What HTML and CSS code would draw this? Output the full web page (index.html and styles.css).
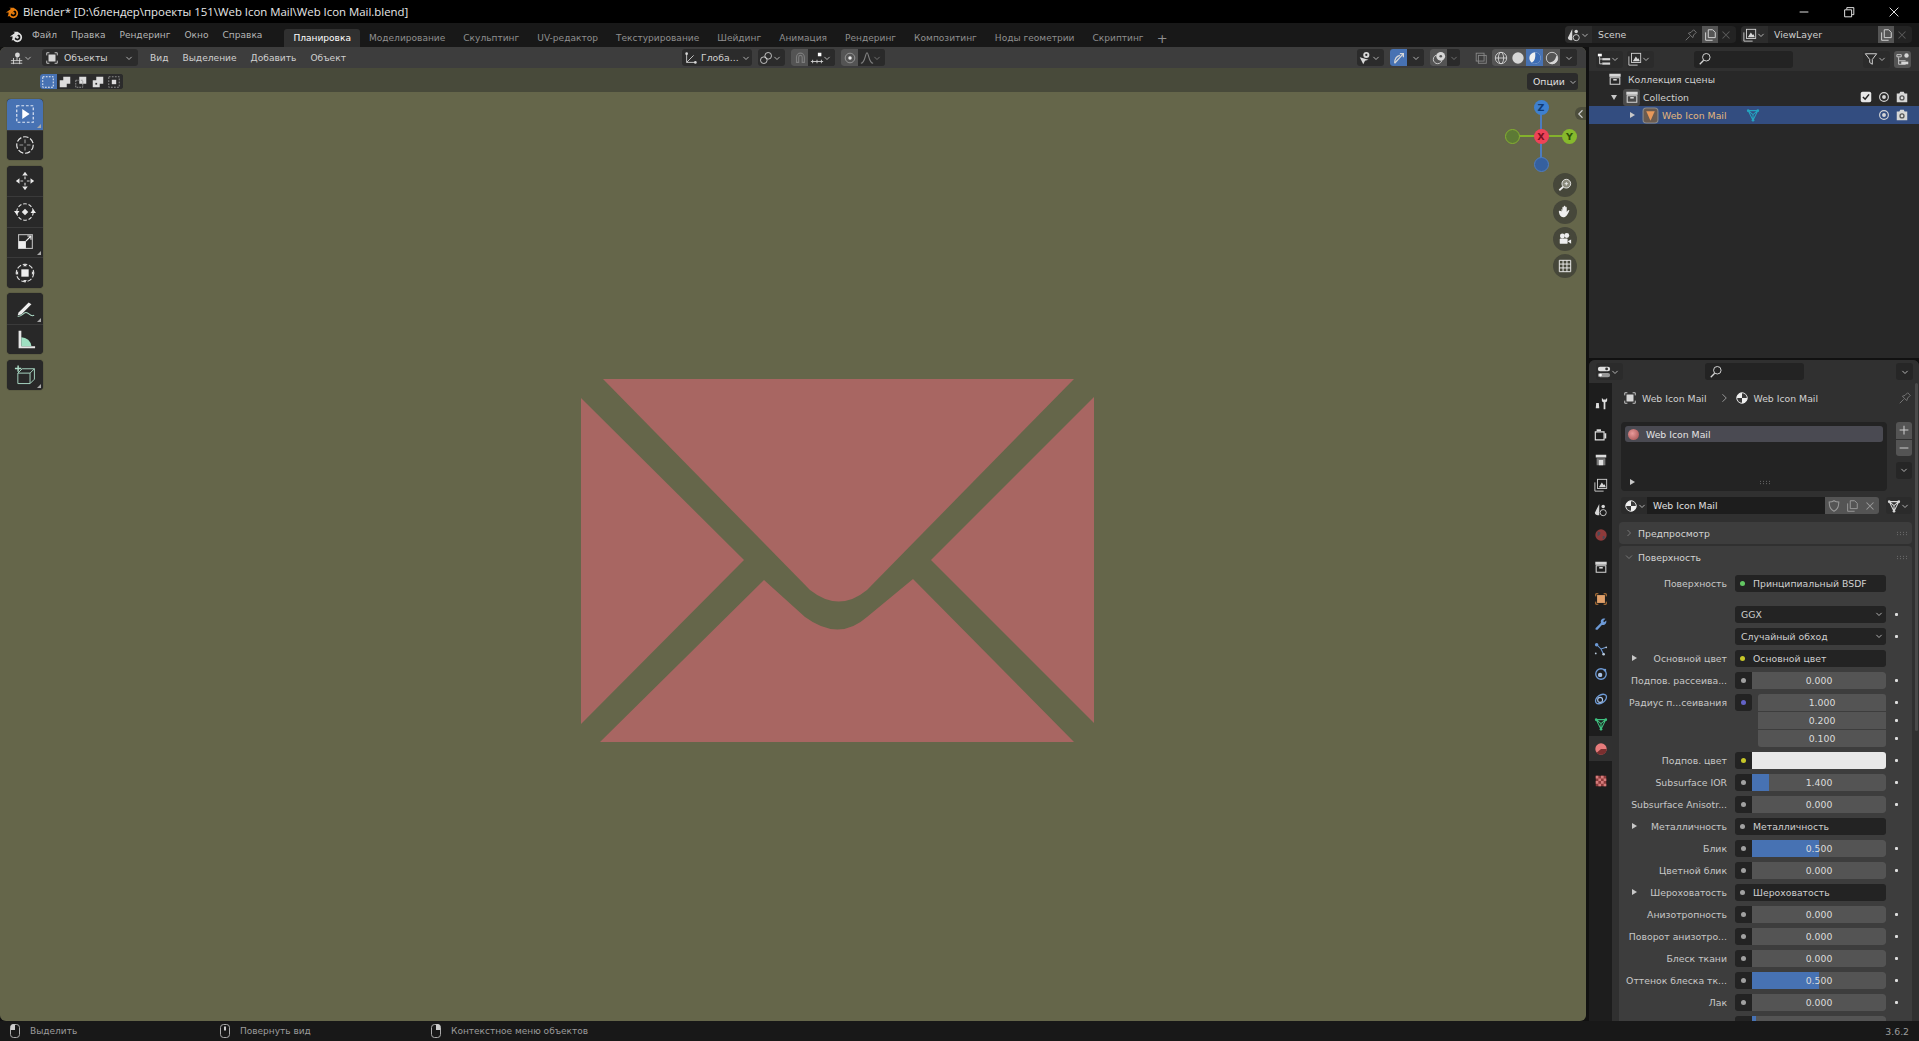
FILE: index.html
```html
<!DOCTYPE html>
<html lang="en">
<head>
  <meta charset="UTF-8" />
  <title>Blender</title>
  <link rel="stylesheet" href="styles.css">
</head>
<body>

  <!-- icon sprite -->
  <svg class="sprite" xmlns="http://www.w3.org/2000/svg">
    <symbol id="chev" viewBox="0 0 16 16"><path d="M4.5 6.5 8 10l3.500-3.500" fill="none" stroke="currentColor" stroke-width="1.200"/></symbol>
    <symbol id="blender" viewBox="0 0 16 16"><circle cx="9.500" cy="9.500" r="4.500" fill="none" stroke="currentColor" stroke-width="2"/><path d="M1 8.500 7 4.500 5 3h5l4 4-3-1-6 6.500-2 .5 2-4.500z" fill="currentColor"/><circle cx="9.500" cy="9.500" r="1.500" fill="currentColor"/></symbol>
    <symbol id="view3d" viewBox="0 0 16 16"><path d="M1 11h13M4 8v7M11 8v7M1 14h13" stroke="currentColor" fill="none"/><circle cx="8.500" cy="4.500" r="2.800" fill="currentColor"/><path d="M8 7v4" stroke="currentColor"/></symbol>
    <symbol id="obj" viewBox="0 0 16 16"><path d="M2 5V2h3M11 2h3v3M14 11v3h-3M5 14H2v-3" fill="none" stroke="currentColor"/><rect x="4" y="4" width="8" height="8" fill="currentColor"/></symbol>
    <symbol id="orient" viewBox="0 0 16 16"><path d="M3 3v10h10M3 13l8-8" fill="none" stroke="currentColor"/><circle cx="3" cy="3" r="1.500" fill="currentColor"/><circle cx="13" cy="13" r="1.500" fill="currentColor"/></symbol>
    <symbol id="pivot" viewBox="0 0 16 16"><circle cx="5.500" cy="10.500" r="3.800" fill="none" stroke="currentColor"/><circle cx="10.500" cy="5.500" r="3.800" fill="none" stroke="currentColor"/></symbol>
    <symbol id="magnet" viewBox="0 0 16 16"><path d="M4 13V7a4.500 4.500 0 0 1 9 0v6h-2.500V7a2 2 0 0 0-4 0v6z" fill="none" stroke="currentColor" stroke-width="1.300"/></symbol>
    <symbol id="snapgrid" viewBox="0 0 16 16"><path d="M1 12h14M3 10v4M8 10v4M13 10v4" stroke="currentColor" fill="none"/><rect x="9" y="2" width="4" height="4" fill="#fff"/></symbol>
    <symbol id="propedit" viewBox="0 0 16 16"><circle cx="8" cy="8" r="5.500" fill="none" stroke="#9a9a9a"/><circle cx="8" cy="8" r="2" fill="#eee"/></symbol>
    <symbol id="falloff" viewBox="0 0 16 16"><path d="M1 14C6 14 6 2 8 2s2 12 7 12" fill="none" stroke="currentColor" stroke-width="1.200"/></symbol>
    <symbol id="vis" viewBox="0 0 16 16"><path d="M2 7l10 3-4 1-2 4z" fill="currentColor"/><circle cx="9.500" cy="4.500" r="3.500" fill="currentColor"/><circle cx="9.500" cy="4.500" r="1.300" fill="#2a2a2a"/></symbol>
    <symbol id="gizmo" viewBox="0 0 16 16"><path d="M3 14 13 3M9 3h4v4M3 14C3 9 5 6 9 5" fill="none" stroke="currentColor" stroke-width="1.400"/></symbol>
    <symbol id="overlay" viewBox="0 0 16 16"><circle cx="6.500" cy="9.500" r="5" fill="none" stroke="currentColor"/><circle cx="10" cy="6" r="5" fill="currentColor"/><circle cx="10" cy="6" r="1.500" fill="#555"/></symbol>
    <symbol id="xray" viewBox="0 0 16 16"><rect x="2.500" y="2.500" width="9" height="9" fill="none" stroke="currentColor"/><rect x="5" y="5" width="9" height="9" fill="none" stroke="currentColor"/></symbol>
    <symbol id="shwire" viewBox="0 0 16 16"><g fill="none" stroke="currentColor"><circle cx="8" cy="8" r="6.500"/><ellipse cx="8" cy="8" rx="3" ry="6.500"/><path d="M1.500 8h13"/></g></symbol>
    <symbol id="shsolid" viewBox="0 0 16 16"><circle cx="8" cy="8" r="6.500" fill="currentColor"/></symbol>
    <symbol id="shmat" viewBox="0 0 16 16"><circle cx="8" cy="8" r="6.500" fill="#f0f0f0"/><path d="M8 1.500a6.500 6.500 0 0 1 0 13c-2 0-3-1-3.500-1.500C8 12 9 6 8 1.500z" fill="#3b6cb5"/></symbol>
    <symbol id="shrend" viewBox="0 0 16 16"><circle cx="8" cy="8" r="6.500" fill="none" stroke="currentColor"/><path d="M13 5a6 6 0 0 1-9 8c5 0 8-3 9-8z" fill="currentColor"/></symbol>
    <symbol id="scene" viewBox="0 0 16 16"><path d="M6 1 1 11c0 2 2 3 5 3z" fill="currentColor"/><circle cx="10.500" cy="4" r="2" fill="currentColor"/><circle cx="10.500" cy="11" r="3.500" fill="none" stroke="currentColor"/></symbol>
    <symbol id="layers" viewBox="0 0 16 16"><path d="M1 5v10h10" fill="none" stroke="currentColor"/><rect x="4" y="1.500" width="10.500" height="10.500" fill="none" stroke="currentColor"/><path d="M5.500 10.500 9 5l2 3 1-1 1.500 3.500z" fill="currentColor"/></symbol>
    <symbol id="pin" viewBox="0 0 16 16"><path d="M2 14l4.500-4.500M5 6l5 5 1-3 3-3-3-3-3 3z" fill="none" stroke="currentColor"/></symbol>
    <symbol id="newdoc" viewBox="0 0 16 16"><path d="M3 5v9h8M6 2v9h8V5l-3-3z" fill="none" stroke="currentColor" stroke-width="1.100"/></symbol>
    <symbol id="close" viewBox="0 0 16 16"><path d="M4 4l8 8M12 4l-8 8" fill="none" stroke="currentColor" stroke-width="1.200"/></symbol>
    <symbol id="outl" viewBox="0 0 16 16"><rect x="1" y="2" width="4.500" height="3" fill="#fff"/><rect x="6" y="7" width="9" height="2.500" fill="currentColor"/><rect x="6" y="12" width="9" height="2.500" fill="currentColor"/><path d="M3 5v8.500h3M3 8h3" fill="none" stroke="currentColor"/></symbol>
    <symbol id="search" viewBox="0 0 16 16"><circle cx="9.500" cy="6" r="4.300" fill="none" stroke="currentColor" stroke-width="1.100"/><path d="M6.500 9.500 2 14" stroke="currentColor" stroke-width="1.500"/></symbol>
    <symbol id="filter" viewBox="0 0 16 16"><path d="M1.500 2h13L9.500 8.500V14l-3-2V8.500z" fill="none" stroke="currentColor" stroke-width="1.100"/></symbol>
    <symbol id="newcoll" viewBox="0 0 16 16"><path d="M1 3h5v2.500H1zM3 6v8h8M3 10h8" fill="none" stroke="currentColor"/><rect x="6" y="11" width="8" height="3" fill="currentColor"/><circle cx="12" cy="4" r="2.500" fill="currentColor"/></symbol>
    <symbol id="coll" viewBox="0 0 16 16"><rect x="1.500" y="2" width="13" height="3.500" fill="currentColor"/><path d="M2.500 6.500h11V14h-11z" fill="none" stroke="currentColor" stroke-width="1.200"/><rect x="6" y="8" width="4" height="1.800" fill="currentColor"/></symbol>
    <symbol id="eye" viewBox="0 0 16 16"><circle cx="8" cy="8" r="5" fill="none" stroke="currentColor" stroke-width="1.300"/><circle cx="8" cy="8" r="2.200" fill="currentColor"/></symbol>
    <symbol id="cam" viewBox="0 0 16 16"><path d="M2 4h3l1-2h4l1 2h3v10H2z" fill="currentColor"/><circle cx="8" cy="9" r="3" fill="#555"/><circle cx="8" cy="9" r="1.500" fill="#ddd"/></symbol>
    <symbol id="check" viewBox="0 0 16 16"><rect x="2" y="2" width="12" height="12" rx="2" fill="#e6e6e6"/><path d="M4.500 8 7 10.500 11.500 5" fill="none" stroke="#222" stroke-width="1.800"/></symbol>
    <symbol id="meshdata" viewBox="0 0 16 16"><path d="M2.500 3h11L8 14z M2.500 3 8 7.500 13.500 3M8 7.500V14" fill="none" stroke="currentColor" stroke-width="1.200"/><g fill="currentColor"><circle cx="2.500" cy="3" r="1.500"/><circle cx="13.500" cy="3" r="1.500"/><circle cx="8" cy="14" r="1.500"/></g></symbol>
    <symbol id="meshobj" viewBox="0 0 16 16"><rect x="1" y="1" width="14" height="14" rx="3" fill="#6a5b50" stroke="#8b8b8b"/><path d="M4 4h8l-4 9z" fill="#e8985a"/></symbol>
    <symbol id="matball" viewBox="0 0 16 16"><circle cx="8" cy="8" r="6" fill="#f0f0f0" stroke="#f0f0f0"/><path d="M8 2.500A5.500 5.500 0 0 1 13.500 8H8zM8 8H2.500A5.500 5.500 0 0 0 8 13.500z" fill="#3a3a3a"/></symbol>
    <symbol id="shield" viewBox="0 0 16 16"><path d="M2.500 3.500C5 3.500 6.500 3 8 2c1.500 1 3 1.500 5.500 1.500 0 5-1 8.500-5.500 10.500C3.500 12 2.500 8.500 2.500 3.500z" fill="none" stroke="currentColor" stroke-width="1.200"/></symbol>
    <symbol id="prefs" viewBox="0 0 16 16"><rect x="1" y="2" width="14" height="5" rx="2.500" fill="#e0e0e0"/><rect x="1" y="9" width="14" height="5" rx="2.500" fill="#999"/><circle cx="11" cy="4.500" r="1.600" fill="#333"/><circle cx="4" cy="11.500" r="1.600" fill="#fff"/></symbol>

    <!-- toolbar -->
    <symbol id="t-select" viewBox="0 0 24 24"><rect x="3" y="3" width="18" height="18" fill="none" stroke="#dfe7f5" stroke-width="1.300" stroke-dasharray="3 2"/><path d="M9 6.500 17 12l-8 5.500z" fill="#fff"/></symbol>
    <symbol id="t-cursor" viewBox="0 0 24 24"><circle cx="12" cy="12" r="9" fill="none" stroke="#e8e8e8" stroke-width="1.300" stroke-dasharray="6 2"/><path d="M12 6v4M12 14v4M6 12h4M14 12h4" stroke="#9a9a9a" stroke-width="1.200"/></symbol>
    <symbol id="t-move" viewBox="0 0 24 24"><path d="M12 2l3 4H9zM12 22l-3-4h6zM2 12l4-3v6zM22 12l-4 3V9z" fill="#e8e8e8"/><path d="M12 7v3M12 14v3M7 12h3M14 12h3" stroke="#d0d0d0" stroke-width="1.300"/></symbol>
    <symbol id="t-rotate" viewBox="0 0 24 24"><path d="M3 12a9 9 0 0 1 18 0M21 12a9 9 0 0 1-18 0" fill="none" stroke="#e0e0e0" stroke-width="1.200" stroke-dasharray="4 2"/><path d="M0 11h6l-3 4zM18 13h6l-3-4z" fill="#eee"/><rect x="9.500" y="9.500" width="5" height="5" transform="rotate(45 12 12)" fill="#e8e8e8"/></symbol>
    <symbol id="t-scale" viewBox="0 0 24 24"><rect x="5" y="4" width="15" height="15" fill="none" stroke="#bbb" stroke-width="1.200"/><rect x="5" y="11" width="8" height="8" fill="#eee"/><path d="M13 11l5-5M14.500 5.500h4v4" fill="none" stroke="#eee" stroke-width="1.200"/></symbol>
    <symbol id="t-trans" viewBox="0 0 24 24"><circle cx="12" cy="12" r="9.500" fill="none" stroke="#ddd" stroke-width="1.200" stroke-dasharray="5 2"/><rect x="8" y="8" width="8" height="8" fill="#eee"/><path d="M12 1.500l2 3h-4zM12 22.500l-2-3h4zM1.500 12l3-2v4zM22.500 12l-3 2v-4z" fill="#ddd"/></symbol>
    <symbol id="t-annot" viewBox="0 0 24 24"><path d="M5 17 16 6l3 2L8 19l-4 1z" fill="#eee"/><path d="M4 21c4 1 6-4 9-4 4 0 4 5 9 3" fill="none" stroke="#aeddc8" stroke-width="1.100"/></symbol>
    <symbol id="t-measure" viewBox="0 0 24 24"><path d="M5 3h3v17H5zM5 20h18v2H5z" fill="#e6e6e6"/><path d="M8 10a11 11 0 0 1 11 10H8z" fill="#9fe0c2"/></symbol>
    <symbol id="t-add" viewBox="0 0 24 24"><path d="M1 5h7M4.500 1.500v7" stroke="#aeddc8" stroke-width="1.600"/><path d="M6 11h14v12H6zM6 11l5-5h14l-5 5M25 6v12l-5 5" transform="translate(-1.500 -.5) scale(.95)" fill="none" stroke="#a9d8c4" stroke-width="1.100"/></symbol>

    <!-- nav gizmo -->
    <symbol id="n-zoom" viewBox="0 0 16 16"><circle cx="9.500" cy="6.500" r="5" fill="#8a8a7c" stroke="#eee"/><path d="M7.500 6.500h4M9.500 4.500v4" stroke="#eee"/><path d="M6 10l-4.500 4" stroke="#eee" stroke-width="2"/></symbol>
    <symbol id="n-hand" viewBox="0 0 16 16"><path d="M4 6c0-3 1-1 1 1V3c0-1.500 1.500-1.500 1.500 0v3V2c0-1.500 2-1.500 2 0v4V3c0-1.500 1.500-1.500 1.500 0v5c1-2 3-3 3-1.500-1 1.500-2 6-6 7.500-3 0-5-1-6-6-.5-2 2-2 3-.5z" fill="#eee"/></symbol>
    <symbol id="n-cam" viewBox="0 0 16 16"><circle cx="5" cy="4.500" r="2.800" fill="#eee"/><circle cx="10" cy="4" r="2.800" fill="#eee"/><rect x="2" y="7.500" width="9" height="6" rx="1" fill="#eee"/><path d="M11 10.500l4-2v5z" fill="#eee"/></symbol>
    <symbol id="n-grid" viewBox="0 0 16 16"><path d="M1.500 1.500h13v13h-13zM1.500 5.800h13M1.500 10.200h13M5.800 1.500v13M10.200 1.500v13" fill="none" stroke="#eee" stroke-width="1.100"/></symbol>

    <!-- properties tabs -->
    <symbol id="p-tool" viewBox="0 0 16 16"><path d="M4 1v6M2.500 8h3l.5 6H2zM9 2v3c0 1 1 2 2 2v8h2V7c1 0 2-1 2-2V2l-1.500 2h-3z" fill="#ddd"/></symbol>
    <symbol id="p-render" viewBox="0 0 16 16"><path d="M1.500 4.500h10v9h-10z" fill="none" stroke="#e0e0e0" stroke-width="1.300"/><path d="M12 6h2v6h-2z" fill="#ddd"/><rect x="3" y="1.500" width="5" height="2" fill="#ddd"/></symbol>
    <symbol id="p-output" viewBox="0 0 16 16"><path d="M2 2h12v3H2z" fill="#ddd"/><path d="M3 6h10v8H3z" fill="#777"/><path d="M5.500 8h5v6h-5z" fill="#ddd"/></symbol>
    <symbol id="p-layer" viewBox="0 0 16 16"><use href="#layers" width="16" height="16"/></symbol>
    <symbol id="p-world" viewBox="0 0 16 16"><circle cx="8" cy="8" r="6.500" fill="#8f3a3a"/><path d="M4 4c3 0 4 1 3 3s-3 1-3 4M10 9c2 0 3 0 2 3l-2 1z" fill="#4a4a55"/></symbol>
    <symbol id="p-object" viewBox="0 0 16 16"><path d="M2 5V2h3M11 2h3v3M14 11v3h-3M5 14H2v-3" fill="none" stroke="#d8893f"/><rect x="3.500" y="3.500" width="9" height="9" fill="#e0a06a"/></symbol>
    <symbol id="p-mod" viewBox="0 0 16 16"><path d="M2 12.500 8 6.500C7 3.500 9.500 1 13 2l-2.500 2.500 1 1.500L14 4c.8 3.500-2 6-5 5l-5 5.500c-2 .5-3-.5-2-2z" fill="#6d9ad6"/></symbol>
    <symbol id="p-part" viewBox="0 0 16 16"><path d="M3 3l5 5 6-2M8 8l3 6" stroke="#6d9ad6" stroke-width="1.200" fill="none"/><circle cx="3" cy="3" r="2" fill="#6d9ad6"/><circle cx="14" cy="6" r="1" fill="#bcd"/><circle cx="11" cy="14" r="1.500" fill="#bcd"/><circle cx="2" cy="13" r="1" fill="#bcd"/></symbol>
    <symbol id="p-phys" viewBox="0 0 16 16"><circle cx="8" cy="8" r="6" fill="none" stroke="#6d9ad6" stroke-width="1.500"/><circle cx="7" cy="9" r="2.500" fill="#a9c4e8"/><circle cx="12.500" cy="3.500" r="1.500" fill="#6d9ad6"/></symbol>
    <symbol id="p-cons" viewBox="0 0 16 16"><ellipse cx="8" cy="8" rx="7" ry="4.500" transform="rotate(-35 8 8)" fill="none" stroke="#6d9ad6" stroke-width="1.500"/><circle cx="7" cy="9" r="2.800" fill="none" stroke="#a9c4e8" stroke-width="1.300"/></symbol>
    <symbol id="p-data" viewBox="0 0 16 16"><use href="#meshdata" width="16" height="16"/></symbol>
    <symbol id="p-mat" viewBox="0 0 16 16"><circle cx="8" cy="8" r="6.500" fill="#e67b7b"/><path d="M8 8h6.500A6.500 6.500 0 0 1 3 12.200z" fill="#7a2f2f"/></symbol>
    <symbol id="p-tex" viewBox="0 0 16 16"><rect x="2" y="2" width="12" height="12" fill="#8c3b3b"/><path d="M2 2h3v3H2zM8 2h3v3H8zM5 5h3v3H5zM11 5h3v3h-3zM2 8h3v3H2zM8 8h3v3H8zM5 11h3v3H5zM11 11h3v3h-3z" fill="#d67c7c"/></symbol>

    <symbol id="mouse-l" viewBox="0 0 12 16"><rect x="1.500" y="1.500" width="9" height="13" rx="3" fill="none" stroke="#aaa"/><path d="M1.500 7V4.500a3 3 0 0 1 4.500-3V7z" fill="#ccc"/></symbol>
    <symbol id="mouse-m" viewBox="0 0 12 16"><rect x="1.500" y="1.500" width="9" height="13" rx="3" fill="none" stroke="#aaa"/><rect x="5" y="3.500" width="2" height="4" fill="#ccc"/></symbol>
    <symbol id="mouse-r" viewBox="0 0 12 16"><rect x="1.500" y="1.500" width="9" height="13" rx="3" fill="none" stroke="#aaa"/><path d="M10.500 7V4.500a3 3 0 0 0-4.500-3V7z" fill="#ccc"/></symbol>
  </svg>

  <div class="titlebar">
    <svg class="ic title-logo"><use href="#blender"/></svg>
    <span class="title-text">Blender* [D:\блендер\проекты 151\Web Icon Mail\Web Icon Mail.blend]</span>
    <div class="win-btns">
      <svg class="ic" viewBox="0 0 16 16"><path d="M3 8h10" stroke="#fff"/></svg>
      <svg class="ic" viewBox="0 0 16 16"><path d="M3 5.500h8v8H3zM5.500 5V3h8v8H11.500" fill="none" stroke="#fff"/></svg>
      <svg class="ic" viewBox="0 0 16 16"><path d="M3 3l10 10M13 3 3 13" stroke="#fff"/></svg>
    </div>
  </div>

  <div class="topbar">
    <svg class="ic top-logo"><use href="#blender"/></svg>
    <nav class="menu">
      <span>Файл</span><span>Правка</span><span>Рендеринг</span><span>Окно</span><span>Справка</span>
    </nav>
    <nav class="tabs">
      <span class="tab active">Планировка</span>
      <span class="tab">Моделирование</span>
      <span class="tab">Скульптинг</span>
      <span class="tab">UV-редактор</span>
      <span class="tab">Текстурирование</span>
      <span class="tab">Шейдинг</span>
      <span class="tab">Анимация</span>
      <span class="tab">Рендеринг</span>
      <span class="tab">Композитинг</span>
      <span class="tab">Ноды геометрии</span>
      <span class="tab">Скриптинг</span>
      <span class="tab plus">+</span>
    </nav>
    <div class="selector scene-sel">
      <span class="sel-icon"><svg class="ic"><use href="#scene"/></svg><svg class="ic chev"><use href="#chev"/></svg></span>
      <span class="sel-name">Scene</span>
      <svg class="ic dim"><use href="#pin"/></svg>
      <span class="sel-btn"><svg class="ic"><use href="#newdoc"/></svg></span>
      <span class="sel-x"><svg class="ic"><use href="#close"/></svg></span>
    </div>
    <div class="selector layer-sel">
      <span class="sel-icon"><svg class="ic"><use href="#layers"/></svg><svg class="ic chev"><use href="#chev"/></svg></span>
      <span class="sel-name">ViewLayer</span>
      <span class="sel-btn"><svg class="ic"><use href="#newdoc"/></svg></span>
      <span class="sel-x"><svg class="ic"><use href="#close"/></svg></span>
    </div>
  </div>

  <div class="workspace">

    <main class="viewport">
      <div class="vp-header">
        <span class="hbtn editor-btn"><svg class="ic"><use href="#view3d"/></svg><svg class="ic chev"><use href="#chev"/></svg></span>
        <span class="hbtn mode-btn"><svg class="ic"><use href="#obj"/></svg><span class="mode-label">Объекты</span><svg class="ic chev"><use href="#chev"/></svg></span>
        <nav class="vp-menu"><span>Вид</span><span>Выделение</span><span>Добавить</span><span>Объект</span></nav>

        <div class="vp-center">
          <span class="hbtn orient-btn"><svg class="ic"><use href="#orient"/></svg><span>Глоба...</span><svg class="ic chev"><use href="#chev"/></svg></span>
          <span class="hbtn pivot-btn"><svg class="ic"><use href="#pivot"/></svg><svg class="ic chev"><use href="#chev"/></svg></span>
          <span class="group">
            <span class="gbtn grey"><svg class="ic dim"><use href="#magnet"/></svg></span>
            <span class="gbtn wide"><svg class="ic"><use href="#snapgrid"/></svg><svg class="ic chev"><use href="#chev"/></svg></span>
          </span>
          <span class="group">
            <span class="gbtn grey"><svg class="ic"><use href="#propedit"/></svg></span>
            <span class="gbtn wide off"><svg class="ic"><use href="#falloff"/></svg><svg class="ic chev"><use href="#chev"/></svg></span>
          </span>
        </div>

        <div class="vp-right">
          <span class="hbtn vis-btn"><svg class="ic"><use href="#vis"/></svg><svg class="ic chev"><use href="#chev"/></svg></span>
          <span class="group">
            <span class="gbtn blue"><svg class="ic"><use href="#gizmo"/></svg></span>
            <span class="gbtn"><svg class="ic chev"><use href="#chev"/></svg></span>
          </span>
          <span class="group">
            <span class="gbtn grey"><svg class="ic"><use href="#overlay"/></svg></span>
            <span class="gbtn narrow off"><svg class="ic chev"><use href="#chev"/></svg></span>
          </span>
          <span class="gbtn xray off"><svg class="ic"><use href="#xray"/></svg></span>
          <span class="group">
            <span class="gbtn grey"><svg class="ic"><use href="#shwire"/></svg></span>
            <span class="gbtn grey"><svg class="ic"><use href="#shsolid"/></svg></span>
            <span class="gbtn blue"><svg class="ic"><use href="#shmat"/></svg></span>
            <span class="gbtn grey"><svg class="ic"><use href="#shrend"/></svg></span>
            <span class="gbtn"><svg class="ic chev"><use href="#chev"/></svg></span>
          </span>
        </div>
      </div>

      <div class="vp-tools">
        <span class="group selmode">
          <span class="gbtn blue"><svg class="ic" viewBox="0 0 16 16"><rect x="2" y="2" width="12" height="12" fill="none" stroke="#fff" stroke-dasharray="2 1.500"/></svg></span>
          <span class="gbtn"><svg class="ic" viewBox="0 0 16 16"><path d="M6 2h8v8H10v4H2V6h4z" fill="#ddd"/></svg></span>
          <span class="gbtn"><svg class="ic" viewBox="0 0 16 16"><path d="M6 2h8v8H6z" fill="#ddd"/><path d="M2 6h8v8H2z" fill="none" stroke="#999" stroke-dasharray="2 1"/></svg></span>
          <span class="gbtn"><svg class="ic" viewBox="0 0 16 16"><path d="M6 2h8v8h-4V6H6zM2 6h8v8H2z" fill="#ddd"/><rect x="5" y="9" width="2" height="2" fill="#333"/></svg></span>
          <span class="gbtn"><svg class="ic" viewBox="0 0 16 16"><rect x="2" y="2" width="12" height="12" fill="none" stroke="#999" stroke-dasharray="2 1.500"/><rect x="5.500" y="5.500" width="5" height="5" fill="#ddd"/></svg></span>
        </span>
        <span class="hbtn options-btn">Опции<svg class="ic chev"><use href="#chev"/></svg></span>
      </div>

      <div class="canvas">
        <svg class="envelope" viewBox="580 378 515 365">
          <path d="M603 379H1074L867 590Q839 613 810 590Z"/>
          <path d="M581 398 744 560 581 724Z"/>
          <path d="M1094 397 931 560 1094 723Z"/>
          <path d="M600 742 764 580 805 617Q839 642 867 617L913 579 1074 742Z"/>
        </svg>

        <div class="toolbar">
          <div class="tool-group">
            <span class="tool active more"><svg class="ic-tool"><use href="#t-select"/></svg></span>
            <span class="tool"><svg class="ic-tool"><use href="#t-cursor"/></svg></span>
          </div>
          <div class="tool-group">
            <span class="tool"><svg class="ic-tool"><use href="#t-move"/></svg></span>
            <span class="tool"><svg class="ic-tool"><use href="#t-rotate"/></svg></span>
            <span class="tool more"><svg class="ic-tool"><use href="#t-scale"/></svg></span>
            <span class="tool"><svg class="ic-tool"><use href="#t-trans"/></svg></span>
          </div>
          <div class="tool-group">
            <span class="tool more"><svg class="ic-tool"><use href="#t-annot"/></svg></span>
            <span class="tool"><svg class="ic-tool"><use href="#t-measure"/></svg></span>
          </div>
          <div class="tool-group">
            <span class="tool more"><svg class="ic-tool"><use href="#t-add"/></svg></span>
          </div>
        </div>

        <div class="axis">
          <span class="axis-line v"></span>
          <span class="axis-line h"></span>
          <span class="ball ball-z">Z</span>
          <span class="ball ball-x">X</span>
          <span class="ball ball-y">Y</span>
          <span class="ball ball-ny"></span>
          <span class="ball ball-nz"></span>
        </div>

        <span class="side-handle"><svg class="ic" viewBox="0 0 16 16"><path d="M10 3 5 8l5 5" fill="none" stroke="#ccc" stroke-width="1.500"/></svg></span>

        <div class="navbtns">
          <span><svg class="ic"><use href="#n-zoom"/></svg></span>
          <span><svg class="ic"><use href="#n-hand"/></svg></span>
          <span><svg class="ic"><use href="#n-cam"/></svg></span>
          <span><svg class="ic"><use href="#n-grid"/></svg></span>
        </div>
      </div>
    </main>

    <aside class="side">

      <section class="outliner">
        <div class="ol-header">
          <span class="hbtn ol-btn"><svg class="ic"><use href="#outl"/></svg><svg class="ic chev"><use href="#chev"/></svg></span>
          <span class="hbtn ol-btn"><svg class="ic"><use href="#layers"/></svg><svg class="ic chev"><use href="#chev"/></svg></span>
          <span class="search ol-search"><svg class="ic"><use href="#search"/></svg></span>
          <span class="hbtn ol-btn ol-filter"><svg class="ic"><use href="#filter"/></svg><svg class="ic chev"><use href="#chev"/></svg></span>
          <span class="gbtn grey solo"><svg class="ic"><use href="#newcoll"/></svg></span>
        </div>
        <div class="ol-row lvl0"><svg class="ic"><use href="#coll"/></svg><span>Коллекция сцены</span></div>
        <div class="ol-row lvl1">
          <i class="tri down"></i>
          <span class="ol-box"><svg class="ic"><use href="#coll"/></svg></span>
          <span>Collection</span>
          <span class="ol-restrict">
            <svg class="ic"><use href="#check"/></svg><svg class="ic"><use href="#eye"/></svg><svg class="ic"><use href="#cam"/></svg>
          </span>
        </div>
        <div class="ol-row lvl2 selected">
          <i class="tri"></i>
          <svg class="ic ol-mesh"><use href="#meshobj"/></svg>
          <span class="ol-name">Web Icon Mail</span>
          <svg class="ic teal"><use href="#meshdata"/></svg>
          <span class="ol-restrict">
            <svg class="ic"><use href="#eye"/></svg><svg class="ic"><use href="#cam"/></svg>
          </span>
        </div>
      </section>

      <section class="props">
        <div class="pr-header">
          <span class="hbtn ol-btn"><svg class="ic"><use href="#prefs"/></svg><svg class="ic chev"><use href="#chev"/></svg></span>
          <span class="search pr-search"><svg class="ic"><use href="#search"/></svg></span>
          <span class="gbtn solo dark"><svg class="ic chev"><use href="#chev"/></svg></span>
        </div>
        <div class="pr-body">
          <div class="pr-tabs">
            <span class="ptab"><svg class="ic"><use href="#p-tool"/></svg></span>
            <span class="ptab sep"><svg class="ic"><use href="#p-render"/></svg></span>
            <span class="ptab"><svg class="ic"><use href="#p-output"/></svg></span>
            <span class="ptab"><svg class="ic"><use href="#p-layer"/></svg></span>
            <span class="ptab"><svg class="ic"><use href="#scene"/></svg></span>
            <span class="ptab"><svg class="ic"><use href="#p-world"/></svg></span>
            <span class="ptab sep"><svg class="ic"><use href="#coll"/></svg></span>
            <span class="ptab sep"><svg class="ic"><use href="#p-object"/></svg></span>
            <span class="ptab"><svg class="ic"><use href="#p-mod"/></svg></span>
            <span class="ptab"><svg class="ic"><use href="#p-part"/></svg></span>
            <span class="ptab"><svg class="ic"><use href="#p-phys"/></svg></span>
            <span class="ptab"><svg class="ic"><use href="#p-cons"/></svg></span>
            <span class="ptab green"><svg class="ic"><use href="#p-data"/></svg></span>
            <span class="ptab active"><svg class="ic"><use href="#p-mat"/></svg></span>
            <span class="ptab sep"><svg class="ic"><use href="#p-tex"/></svg></span>
          </div>

          <div class="pr-main">
            <div class="crumbs">
              <svg class="ic"><use href="#obj"/></svg><span>Web Icon Mail</span>
              <svg class="ic crumb-sep" viewBox="0 0 16 16"><path d="M6 3l5 5-5 5" fill="none" stroke="currentColor" stroke-width="1.300"/></svg>
              <svg class="ic"><use href="#matball"/></svg><span>Web Icon Mail</span>
              <svg class="ic dim crumb-pin"><use href="#pin"/></svg>
            </div>

            <div class="slots">
              <div class="slot-list">
                <div class="slot"><i class="slot-ball"></i>Web Icon Mail</div>
                <div class="slot-foot"><i class="tri"></i><span class="grip"></span></div>
              </div>
              <div class="slot-side">
                <span class="pm"><svg class="ic" viewBox="0 0 16 16"><path d="M8 3v10M3 8h10" stroke="#ccc" stroke-width="1.200"/></svg></span>
                <span class="pm"><svg class="ic" viewBox="0 0 16 16"><path d="M3 8h10" stroke="#ccc" stroke-width="1.200"/></svg></span>
                <span class="pm down"><svg class="ic chev"><use href="#chev"/></svg></span>
              </div>
            </div>

            <div class="matrow">
              <span class="mat-browse"><svg class="ic"><use href="#matball"/></svg><svg class="ic chev"><use href="#chev"/></svg></span>
              <span class="mat-name">Web Icon Mail</span>
              <span class="mat-btn"><svg class="ic"><use href="#shield"/></svg></span>
              <span class="mat-btn"><svg class="ic"><use href="#newdoc"/></svg></span>
              <span class="mat-btn"><svg class="ic"><use href="#close"/></svg></span>
              <span class="mat-link"><svg class="ic"><use href="#meshdata"/></svg><svg class="ic chev"><use href="#chev"/></svg></span>
            </div>

            <div class="panel closed">
              <div class="panel-head"><svg class="ic" viewBox="0 0 16 16"><path d="M6 4l4 4-4 4" fill="none" stroke="currentColor"/></svg>Предпросмотр<span class="grip"></span></div>
            </div>

            <div class="panel">
              <div class="panel-head"><svg class="ic" viewBox="0 0 16 16"><path d="M4 6l4 4 4-4" fill="none" stroke="currentColor"/></svg>Поверхность<span class="grip"></span></div>

              <div class="row"><label>Поверхность</label><span class="field link"><i class="sock green"></i>Принципиальный BSDF</span></div>

              <div class="row spaced"><label></label><span class="field sel">GGX<svg class="ic chev"><use href="#chev"/></svg></span><i class="deco"></i></div>
              <div class="row"><label></label><span class="field sel">Случайный обход<svg class="ic chev"><use href="#chev"/></svg></span><i class="deco"></i></div>
              <div class="row"><label><i class="tri"></i>Основной цвет</label><span class="field link"><i class="sock yellow"></i>Основной цвет</span></div>
              <div class="row"><label>Подпов. рассеива...</label><span class="field num"><i class="sock grey"></i><span class="val">0.000</span></span><i class="deco"></i></div>

              <div class="row vec">
                <label>Радиус п...сеивания</label>
                <span class="sock-box"><i class="sock purple"></i></span>
                <span class="vec-vals"><span>1.000</span><span>0.200</span><span>0.100</span></span>
                <span class="deco-col"><i class="deco"></i><i class="deco"></i><i class="deco"></i></span>
              </div>

              <div class="row"><label>Подпов. цвет</label><span class="field num"><i class="sock yellow"></i><span class="val swatch"></span></span><i class="deco"></i></div>
              <div class="row"><label>Subsurface IOR</label><span class="field num"><i class="sock grey"></i><span class="val"><b class="fill" style="width:13%"></b><em>1.400</em></span></span><i class="deco"></i></div>
              <div class="row"><label>Subsurface Anisotr...</label><span class="field num"><i class="sock grey"></i><span class="val">0.000</span></span><i class="deco"></i></div>
              <div class="row"><label><i class="tri"></i>Металличность</label><span class="field link"><i class="sock grey"></i>Металличность</span></div>
              <div class="row"><label>Блик</label><span class="field num"><i class="sock grey"></i><span class="val"><b class="fill" style="width:50%"></b><em>0.500</em></span></span><i class="deco"></i></div>
              <div class="row"><label>Цветной блик</label><span class="field num"><i class="sock grey"></i><span class="val">0.000</span></span><i class="deco"></i></div>
              <div class="row"><label><i class="tri"></i>Шероховатость</label><span class="field link"><i class="sock grey"></i>Шероховатость</span></div>
              <div class="row"><label>Анизотропность</label><span class="field num"><i class="sock grey"></i><span class="val">0.000</span></span><i class="deco"></i></div>
              <div class="row"><label>Поворот анизотро...</label><span class="field num"><i class="sock grey"></i><span class="val">0.000</span></span><i class="deco"></i></div>
              <div class="row"><label>Блеск ткани</label><span class="field num"><i class="sock grey"></i><span class="val">0.000</span></span><i class="deco"></i></div>
              <div class="row"><label>Оттенок блеска тк...</label><span class="field num"><i class="sock grey"></i><span class="val"><b class="fill" style="width:50%"></b><em>0.500</em></span></span><i class="deco"></i></div>
              <div class="row"><label>Лак</label><span class="field num"><i class="sock grey"></i><span class="val">0.000</span></span><i class="deco"></i></div>
              <div class="row"><label>Шероховатость лака</label><span class="field num"><i class="sock grey"></i><span class="val"><b class="fill" style="width:3%"></b><em>0.030</em></span></span><i class="deco"></i></div>
            </div>
            <span class="scrollbar"></span>
          </div>
        </div>
      </section>

    </aside>
  </div>

  <footer class="statusbar">
    <span class="hint first"><svg class="mouse"><use href="#mouse-l"/></svg>Выделить</span>
    <span class="hint second"><svg class="mouse"><use href="#mouse-m"/></svg>Повернуть вид</span>
    <span class="hint third"><svg class="mouse"><use href="#mouse-r"/></svg>Контекстное меню объектов</span>
    <span class="version">3.6.2</span>
  </footer>

</body>
</html>
```

FILE: styles.css
```css
* {
  box-sizing: border-box;
}
html, body {
  margin: 0;
  height: 100%;
  overflow: hidden;
}
body {
  display: flex;
  flex-direction: column;
  background: #111;
  color: #c8c8c8;
  font-family: "DejaVu Sans", sans-serif;
  font-size: 9.300px;
}
i, em {
  font-style: normal;
}
.sprite {
  display: none;
}
.ic {
  display: block;
  width: 14px;
  height: 14px;
  flex: none;
  color: #d6d6d6;
}
.ic.chev {
  width: 12px;
  height: 12px;
  color: #c0c0c0;
}
.ic.dim {
  color: #7d7d7d;
}

/* title bar */
.titlebar {
  height: 23px;
  flex: none;
  display: flex;
  align-items: center;
  background: #000;
  padding-left: 5px;
}
.title-logo {
  color: #e87d0d;
}
.title-text {
  margin-left: 4px;
  color: #e8e8e8;
  font-family: "Open Sans", sans-serif;
  font-size: 11.400px;
}
.win-btns {
  margin-left: auto;
  display: flex;
  gap: 31px;
  padding-right: 18px;
}

/* top bar */
.topbar {
  height: 24px;
  flex: none;
  display: flex;
  align-items: flex-end;
  background: #181818;
  color: #a8a8a8;
  font-size: 9.050px;
}
.top-logo {
  margin: 0 0 4px 9px;
  color: #e0e0e0;
}
.menu {
  display: flex;
  gap: 14px;
  margin-left: 9px;
  height: 100%;
  align-items: center;
  color: #b4b4b4;
}
.tabs {
  display: flex;
  margin-left: 22px;
  height: 18px;
}
.tab {
  display: flex;
  align-items: center;
  padding: 0 9px;
  color: #8f8f8f;
  border-radius: 3px 3px 0 0;
}
.tab.active {
  background: #303030;
  color: #fff;
}
.tab.plus {
  padding: 0 4px;
  font-size: 13px;
}
.selector {
  display: flex;
  align-items: center;
  height: 17px;
  margin-bottom: 4px;
  border-radius: 4px;
  background: #232323;
  color: #d0d0d0;
  font-size: 9.300px;
}
.scene-sel {
  width: 171px;
  margin-left: auto;
}
.layer-sel {
  width: 171px;
  margin: 0 7px 4px 5px;
}
.sel-icon {
  display: flex;
  align-items: center;
  width: 27px;
  height: 100%;
  padding-left: 2px;
  background: #2c2c2c;
  border-radius: 4px 0 0 4px;
}
.sel-icon .chev {
  margin-left: -2px;
}
.sel-name {
  flex: 1;
  padding-left: 6px;
}
.sel-btn {
  display: flex;
  justify-content: center;
  align-items: center;
  width: 16px;
  height: 100%;
  background: #545454;
}
.sel-x {
  display: flex;
  justify-content: center;
  width: 16px;
  margin-right: 2px;
}
.sel-x .ic {
  color: #5a5a5a;
}
.scene-sel .dim {
  margin-right: 4px;
}

/* main area */
.workspace {
  flex: 1;
  min-height: 0;
  display: flex;
  gap: 3px;
}
.viewport {
  width: 1586px;
  flex: none;
  display: flex;
  flex-direction: column;
  border-radius: 6px;
  overflow: hidden;
  background: #65664a;
}
.vp-header {
  height: 21px;
  flex: none;
  display: flex;
  align-items: center;
  padding-left: 9px;
  background: #3d3d3d;
  position: relative;
}
.hbtn {
  display: flex;
  align-items: center;
  height: 17px;
  background: #2b2b2b;
  border-radius: 3px;
  color: #d0d0d0;
  flex: none;
}
.editor-btn {
  width: 26px;
  padding-left: 1px;
  background: transparent;
}
.editor-btn .chev, .ol-btn .chev {
  margin-left: -2px;
}
.mode-btn {
  width: 96px;
  margin-left: 7px;
  padding: 0 3px 0 3px;
}
.mode-label {
  flex: 1;
  padding-left: 5px;
}
.vp-menu {
  display: flex;
  gap: 14px;
  margin-left: 12px;
  color: #d0d0d0;
  font-size: 9.100px;
}
.vp-center {
  position: absolute;
  left: 682px;
  top: 2px;
  display: flex;
  gap: 6px;
}
.orient-btn {
  width: 70px;
  padding-left: 2px;
}
.orient-btn span {
  flex: 1;
  padding-left: 3px;
}
.pivot-btn {
  width: 27px;
  padding-left: 1px;
}
.pivot-btn .chev {
  margin-left: -2px;
}
.group {
  display: flex;
  height: 17px;
  border-radius: 3px;
  overflow: hidden;
  background: #2b2b2b;
}
.gbtn {
  display: flex;
  justify-content: center;
  align-items: center;
  width: 17px;
  height: 17px;
  flex: none;
  background: #2b2b2b;
}
.gbtn.grey {
  background: #545454;
}
.gbtn.blue {
  background: #4772b3;
}
.gbtn.wide {
  width: 27px;
}
.gbtn.wide .chev {
  margin-left: -3px;
}
.gbtn.narrow {
  width: 13px;
}
.gbtn.off {
  opacity: 0.5;
}
.gbtn.solo {
  border-radius: 3px;
}
.gbtn.dark {
  background: #262626;
}
.vp-right {
  position: absolute;
  left: 1357px;
  top: 2px;
  display: flex;
  gap: 6px;
}
.vis-btn {
  width: 27px;
  padding-left: 1px;
}
.vis-btn .chev {
  margin-left: -2px;
}
.xray {
  background: #3d3d3d;
  margin: 0 -3px 0 6px;
}

.vp-tools {
  height: 24px;
  flex: none;
  display: flex;
  align-items: center;
  padding: 3px 8px 0 40px;
  background: #484a3a;
}
.selmode .gbtn {
  width: 16.500px;
  height: 15px;
}
.selmode {
  height: 15px;
}
.selmode .ic {
  width: 14px;
  height: 14px;
}
.options-btn {
  width: 51px;
  margin-left: auto;
  padding-left: 6px;
  gap: 2px;
  color: #e0e0e0;
}

/* canvas */
.canvas {
  flex: 1;
  position: relative;
}
.envelope {
  position: absolute;
  left: 580px;
  top: 286px;
  width: 515px;
  height: 365px;
  fill: #a86662;
}
.toolbar {
  position: absolute;
  left: 7px;
  top: 7px;
  width: 36px;
  display: flex;
  flex-direction: column;
  gap: 5.500px;
}
.tool-group {
  background: #282828;
  border-radius: 4px;
  overflow: hidden;
  box-shadow: 0 0 1px #1a1a1a;
}
.tool {
  position: relative;
  display: flex;
  height: 30.500px;
  align-items: center;
  justify-content: center;
}
.tool + .tool {
  border-top: 1px solid #3a3a3a;
}
.tool.active {
  background: #4772b3;
}
.tool.more::after {
  content: "";
  position: absolute;
  right: 2px;
  bottom: 2px;
  border-left: 4px solid transparent;
  border-bottom: 4px solid #aaa;
}
.ic-tool {
  display: block;
  width: 22px;
  height: 22px;
}

.axis {
  position: absolute;
  left: 1505px;
  top: 8px;
  width: 72px;
  height: 72px;
}
.axis-line {
  position: absolute;
}
.axis-line.v {
  left: 35px;
  top: 7px;
  width: 2px;
  height: 58px;
  background: #4d7cc0;
}
.axis-line.h {
  left: 7px;
  top: 35px;
  width: 58px;
  height: 2px;
  background: #84b12c;
}
.ball {
  position: absolute;
  width: 15px;
  height: 15px;
  border-radius: 50%;
  text-align: center;
  font-size: 9.500px;
  font-weight: bold;
  line-height: 15px;
}
.ball-z {
  left: 28.500px;
  top: 0;
  background: #3e80cf;
  color: #0f3a74;
}
.ball-x {
  left: 28.500px;
  top: 28.500px;
  background: #ee4358;
  color: #7a0f1e;
}
.ball-y {
  left: 57px;
  top: 28.500px;
  background: #86b92d;
  color: #2c5006;
}
.ball-ny {
  left: 0;
  top: 28.500px;
  background: #5d7a35;
  border: 1.500px solid #85b12f;
}
.ball-nz {
  left: 28.500px;
  top: 57px;
  background: #35609f;
  border: 1.500px solid #4d7cc0;
}
.side-handle {
  position: absolute;
  left: 1575px;
  top: 15px;
  width: 12px;
  height: 13px;
  display: flex;
  align-items: center;
  border-radius: 6px 0 0 6px;
  background: #4d4e3c;
}
.side-handle .ic {
  width: 12px;
  height: 12px;
}
.navbtns {
  position: absolute;
  left: 1553px;
  top: 81px;
  display: flex;
  flex-direction: column;
  gap: 3px;
}
.navbtns span {
  display: flex;
  align-items: center;
  justify-content: center;
  width: 24px;
  height: 24px;
  border-radius: 50%;
  background: #46473a;
}

/* right column */
.side {
  flex: 1;
  min-width: 0;
  display: flex;
  flex-direction: column;
  gap: 2px;
  overflow: hidden;
}
.outliner {
  height: 311px;
  flex: none;
  background: #282828;
  border-radius: 6px 6px 0 0;
}
.ol-header {
  height: 24px;
  display: flex;
  align-items: center;
  padding-left: 7px;
  background: #303030;
  gap: 4px;
}
.ol-btn {
  width: 27px;
  padding-left: 1px;
}
.ol-search {
  width: 99px;
  margin-left: 36px;
}
.ol-filter {
  margin-left: 66px;
}
.search {
  display: flex;
  align-items: center;
  height: 17px;
  padding-left: 4px;
  border-radius: 3px;
  background: #232323;
}
.ol-row {
  position: relative;
  display: flex;
  align-items: center;
  height: 18px;
  color: #d0d0d0;
}
.lvl0 {
  padding-left: 19px;
  gap: 6px;
  margin-top: -1px;
}
.lvl1 {
  padding-left: 22px;
}
.lvl2 {
  padding-left: 41px;
}
.ol-box {
  display: flex;
  width: 17px;
  height: 17px;
  margin: 0 3px 0 6px;
  align-items: center;
  justify-content: center;
  border-radius: 3px;
  background: #4a4a4a;
}
.selected {
  background: #334d80;
}
.ol-name {
  margin-left: 3px;
  width: 84px;
  color: #e3b77c;
}
.ol-mesh {
  width: 17px;
  height: 17px;
  margin-left: 7px;
}
.teal {
  color: #25a3bf;
}
.ol-restrict {
  display: flex;
  position: absolute;
  right: 10px;
  gap: 4px;
}
.tri {
  display: inline-block;
  width: 0;
  height: 0;
  border-left: 5px solid #c8c8c8;
  border-top: 3px solid transparent;
  border-bottom: 3px solid transparent;
}
.tri.down {
  border-left: 3px solid transparent;
  border-right: 3px solid transparent;
  border-top: 5px solid #c8c8c8;
  border-bottom: 0;
}

/* properties */
.props {
  flex: 1;
  min-height: 0;
  display: flex;
  flex-direction: column;
  background: #303030;
  border-radius: 6px 6px 0 0;
  overflow: hidden;
}
.pr-header {
  height: 23px;
  flex: none;
  display: flex;
  align-items: center;
  padding-left: 7px;
  background: #303030;
}
.pr-search {
  width: 99px;
  margin-left: 82px;
}
.pr-header .solo {
  margin-left: 92px;
}
.pr-body {
  flex: 1;
  min-height: 0;
  display: flex;
}
.pr-tabs {
  width: 23px;
  flex: none;
  display: flex;
  flex-direction: column;
  padding-top: 7px;
  background: #1d1d1d;
}
.ptab {
  display: flex;
  justify-content: center;
  align-items: center;
  height: 25px;
  flex: none;
}
.ptab.sep {
  margin-top: 7px;
}
.ptab.green .ic {
  color: #3fbf7f;
}
.ptab.active {
  background: #303030;
}
.pr-main {
  position: relative;
  flex: 1;
  min-width: 0;
  padding: 0 7px 0 7px;
}
.scrollbar {
  position: absolute;
  right: 1px;
  top: 0;
  width: 3px;
  height: 348px;
  background: #4a4a4a;
  border-radius: 2px;
}
.crumbs {
  display: flex;
  align-items: center;
  height: 30px;
  padding-left: 4px;
  gap: 5px;
  color: #d0d0d0;
}
.crumb-sep {
  margin: 0 0 0 6px;
  color: #9a9a9a;
  width: 12px;
  height: 12px;
}
.crumb-pin {
  margin-left: auto;
}
.slots {
  display: flex;
  height: 69px;
  margin-top: 9px;
}
.slot-list {
  width: 266px;
  margin-left: 2px;
  padding: 4px;
  display: flex;
  flex-direction: column;
  justify-content: space-between;
  background: #232323;
  border-radius: 4px;
}
.slot {
  display: flex;
  align-items: center;
  height: 16px;
  padding-left: 3px;
  gap: 7px;
  border-radius: 3px;
  background: #4a4a52;
  color: #e4e4e4;
}
.slot-ball {
  width: 11px;
  height: 11px;
  border-radius: 50%;
  background: radial-gradient(circle at 40% 40%, #e89a9a, #9c4a4a);
}
.slot-foot {
  position: relative;
  display: flex;
  align-items: center;
  height: 10px;
  padding-left: 5px;
}
.slot-foot .grip {
  position: absolute;
  left: 134px;
  margin: 0;
}
.slot-side {
  margin-left: 9px;
  display: flex;
  flex-direction: column;
  width: 16px;
  gap: 1px;
}
.pm {
  display: flex;
  align-items: center;
  justify-content: center;
  height: 16.500px;
  background: #545454;
}
.pm:first-child {
  border-radius: 3px 3px 0 0;
}
.pm:nth-child(2) {
  border-radius: 0 0 3px 3px;
}
.pm.down {
  margin-top: 5px;
  background: #262626;
  border-radius: 3px;
}
.matrow {
  display: flex;
  align-items: center;
  height: 17px;
  margin: 6px 0 8px 0;
}
.mat-browse {
  display: flex;
  align-items: center;
  width: 26px;
  height: 100%;
  padding-left: 3px;
  margin-left: 2px;
  background: #2b2b2b;
  border-radius: 3px 0 0 3px;
}
.mat-browse .chev {
  margin-left: -2px;
}
.mat-name {
  display: flex;
  align-items: center;
  width: 178px;
  height: 100%;
  padding-left: 6px;
  background: #1d1d1d;
  color: #e0e0e0;
}
.mat-btn {
  display: flex;
  align-items: center;
  justify-content: center;
  width: 18px;
  height: 100%;
  background: #545454;
}
.mat-btn .ic {
  color: #9a9a9a;
}
.mat-btn:nth-child(5) {
  border-radius: 0 3px 3px 0;
}
.mat-link {
  display: flex;
  align-items: center;
  width: 26px;
  height: 100%;
  margin-left: auto;
  padding-left: 1px;
  background: #2b2b2b;
  border-radius: 3px;
}
.mat-link .chev {
  margin-left: -2px;
}
.panel {
  background: #3d3d3d;
  border-radius: 4px;
  margin-bottom: 2px;
}
.panel-head {
  display: flex;
  align-items: center;
  height: 22px;
  padding: 0 5px 0 4px;
  gap: 0;
  color: #d4d4d4;
}
.panel-head .ic {
  width: 12px;
  height: 12px;
  margin-right: 3px;
  color: #8a8a8a;
}
.grip {
  display: block;
  margin-left: auto;
  width: 11px;
  height: 5px;
  background-image: radial-gradient(circle, #777 0.6px, transparent 0.8px);
  background-size: 3px 2.500px;
}
.panel:not(.closed) {
  padding-bottom: 4px;
}
.panel:not(.closed) .panel-head {
  margin-bottom: 4px;
}

/* node rows */
.row {
  display: flex;
  align-items: flex-start;
  min-height: 22px;
  padding-top: 2.500px;
}
.row.spaced {
  margin-top: 9px;
}
.row label {
  display: flex;
  justify-content: flex-end;
  align-items: center;
  width: 108px;
  height: 17px;
  flex: none;
  margin-right: 8px;
  padding-left: 13px;
  color: #c8c8c8;
  white-space: nowrap;
}
.row label .tri {
  margin-right: auto;
}
.field {
  display: flex;
  align-items: center;
  width: 151px;
  height: 17px;
  flex: none;
  border-radius: 3px;
  background: #232323;
  color: #d0d0d0;
  overflow: hidden;
}
.field.link {
  padding-left: 5px;
}
.field.link .sock {
  margin-right: 8px;
}
.field.sel {
  justify-content: space-between;
  padding: 0 1px 0 6px;
}
.sock {
  display: block;
  width: 5px;
  height: 5px;
  flex: none;
  border-radius: 50%;
}
.sock.green { background: #63c763; }
.sock.yellow { background: #c7c729; }
.sock.grey { background: #a1a1a1; }
.sock.purple { background: #6363c7; }
.field.num .sock {
  margin: 0 6px;
}
.val {
  position: relative;
  flex: 1;
  height: 100%;
  display: flex;
  align-items: center;
  justify-content: center;
  background: #545454;
  color: #dcdcdc;
}
.val.swatch {
  background: #e8e8e8;
}
.val em {
  position: relative;
}
.fill {
  position: absolute;
  left: 0;
  top: 0;
  bottom: 0;
  background: #4772b3;
}
.deco {
  display: block;
  width: 3px;
  height: 3px;
  margin: 7px 0 0 9px;
  flex: none;
  border-radius: 1px;
  background: #ddd;
}
.row.vec {
  min-height: 58px;
}
.sock-box {
  display: flex;
  align-items: center;
  justify-content: center;
  width: 17px;
  height: 17px;
  flex: none;
  border-radius: 3px;
  background: #232323;
}
.vec-vals {
  display: flex;
  flex-direction: column;
  gap: 1px;
  width: 128px;
  flex: none;
  margin-left: 6px;
  border-radius: 3px;
  overflow: hidden;
}
.vec-vals span {
  height: 17px;
  text-align: center;
  line-height: 17px;
  background: #545454;
  color: #dcdcdc;
}
.deco-col {
  display: flex;
  flex-direction: column;
}
.deco-col .deco {
  margin-bottom: 8px;
}

/* status bar */
.statusbar {
  height: 20px;
  flex: none;
  display: flex;
  align-items: center;
  background: #181818;
  color: #9c9c9c;
  font-size: 9px;
}
.hint {
  display: flex;
  align-items: center;
}
.mouse {
  display: block;
  width: 12px;
  height: 16px;
  margin-right: 9px;
}
.first {
  width: 219px;
  padding-left: 9px;
}
.second {
  width: 211px;
}
.version {
  margin-left: auto;
  padding-right: 10px;
  font-size: 9.300px;
}
```
